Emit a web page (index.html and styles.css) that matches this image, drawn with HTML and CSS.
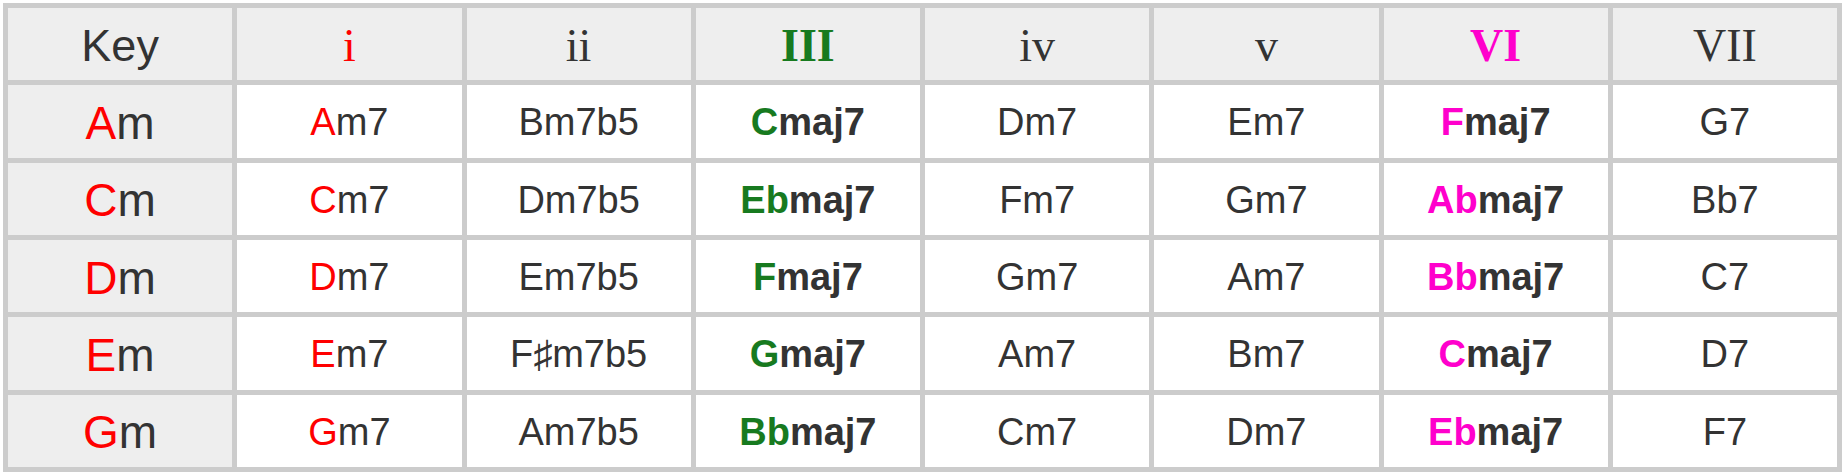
FILE: index.html
```html
<!DOCTYPE html>
<html lang="en">
<head>
<meta charset="utf-8">
<title>Minor key seventh chords</title>
<link rel="stylesheet" href="styles.css">
</head>
<body>
<div class="chart">
  <div class="cell head sans">Key</div>
  <div class="cell head roman red">i</div>
  <div class="cell head roman">ii</div>
  <div class="cell head roman bold green">III</div>
  <div class="cell head roman">iv</div>
  <div class="cell head roman">v</div>
  <div class="cell head roman bold magenta">VI</div>
  <div class="cell head roman">VII</div>

  <div class="cell key"><span class="red">A</span>m</div>
  <div class="cell"><span class="red">A</span>m7</div>
  <div class="cell">Bm7b5</div>
  <div class="cell bold"><span class="green">C</span>maj7</div>
  <div class="cell">Dm7</div>
  <div class="cell">Em7</div>
  <div class="cell bold"><span class="magenta">F</span>maj7</div>
  <div class="cell">G7</div>

  <div class="cell key"><span class="red">C</span>m</div>
  <div class="cell"><span class="red">C</span>m7</div>
  <div class="cell">Dm7b5</div>
  <div class="cell bold"><span class="green">Eb</span>maj7</div>
  <div class="cell">Fm7</div>
  <div class="cell">Gm7</div>
  <div class="cell bold"><span class="magenta">Ab</span>maj7</div>
  <div class="cell">Bb7</div>

  <div class="cell key"><span class="red">D</span>m</div>
  <div class="cell"><span class="red">D</span>m7</div>
  <div class="cell">Em7b5</div>
  <div class="cell bold"><span class="green">F</span>maj7</div>
  <div class="cell">Gm7</div>
  <div class="cell">Am7</div>
  <div class="cell bold"><span class="magenta">Bb</span>maj7</div>
  <div class="cell">C7</div>

  <div class="cell key"><span class="red">E</span>m</div>
  <div class="cell"><span class="red">E</span>m7</div>
  <div class="cell">F&#9839;m7b5</div>
  <div class="cell bold"><span class="green">G</span>maj7</div>
  <div class="cell">Am7</div>
  <div class="cell">Bm7</div>
  <div class="cell bold"><span class="magenta">C</span>maj7</div>
  <div class="cell">D7</div>

  <div class="cell key"><span class="red">G</span>m</div>
  <div class="cell"><span class="red">G</span>m7</div>
  <div class="cell">Am7b5</div>
  <div class="cell bold"><span class="green">Bb</span>maj7</div>
  <div class="cell">Cm7</div>
  <div class="cell">Dm7</div>
  <div class="cell bold"><span class="magenta">Eb</span>maj7</div>
  <div class="cell">F7</div>
</div>
</body>
</html>
```
FILE: styles.css
```css
html, body {
  background: #ffffff;
}
body {
  margin: 3px;
  font-family: "Liberation Sans", Arial, sans-serif;
  color: #333333;
}
.chart {
  width: 1839px;
  height: 469px;
  box-sizing: border-box;
  display: grid;
  grid-template-columns: repeat(8, 1fr);
  grid-template-rows: repeat(6, 1fr);
  gap: 5px;
  padding: 5px;
  background: #cccccc;
}
.cell {
  background: #ffffff;
  display: flex;
  align-items: center;
  justify-content: center;
  font-size: 38px;
  padding-top: 3px;
  white-space: nowrap;
}
.head {
  background: #eeeeee;
}
.head.sans {
  font-size: 45px;
}
.head.roman {
  font-family: "Liberation Serif", "Times New Roman", serif;
  font-size: 46px;
}
.key {
  background: #eeeeee;
  font-size: 46px;
}
.bold {
  font-weight: bold;
}
.red {
  color: #ff0000;
}
.green {
  color: #177a1f;
}
.magenta {
  color: #ff00cc;
}
```
